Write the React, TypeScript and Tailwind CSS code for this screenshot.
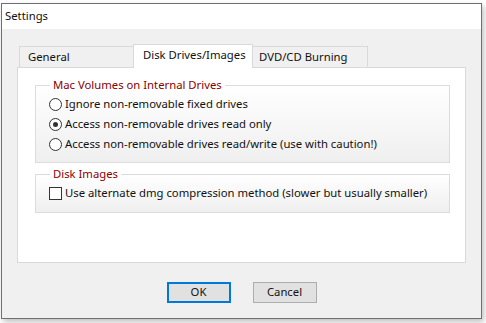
import { useState } from 'react';

const font = { fontFamily: '"Noto Sans", "Open Sans", Arial, sans-serif' };

function Radio({ checked, label, onClick }: { checked: boolean; label: string; onClick: () => void }) {
  return (
    <div className="flex h-[20px] items-center gap-[3px] cursor-default whitespace-nowrap" onClick={onClick}>
      <span className="flex h-[13px] w-[13px] shrink-0 items-center justify-center rounded-full border border-[#333333] bg-white">
        {checked && <span className="h-[5px] w-[5px] rounded-full bg-[#333333]" />}
      </span>
      <span>{label}</span>
    </div>
  );
}

function GroupBox({ title, className, children }: { title: string; className: string; children: React.ReactNode }) {
  return (
    <div className={`relative border border-[#dcdcdc] bg-gradient-to-b from-white to-[#efefef] ${className}`}>
      <span className="absolute -top-[9px] left-[14px] bg-white px-[3px] leading-[16px] text-[#8b0000] whitespace-nowrap">{title}</span>
      {children}
    </div>
  );
}

export default function App() {
  const [mode, setMode] = useState(1);
  const [altDmg, setAltDmg] = useState(false);

  const options = [
    'Ignore non-removable fixed drives',
    'Access non-removable drives read only',
    'Access non-removable drives read/write (use with caution!)',
  ];

  return (
    <div className="h-[323px] w-[486px] bg-white text-[11.3px] text-[#111111]" style={font}>
      <div className="ml-[1px] pt-[3px]">
        <div className="flex h-[316px] w-[481px] flex-col border border-[#6f6f6f] shadow-[2px_3px_6px_rgba(0,0,0,0.25)]">
          <div className="flex h-[25px] items-center bg-white pl-[3px]">Settings</div>
          <div className="flex flex-1 flex-col bg-[#f0f0f0] px-[15px] pt-[15px]">
            <div className="ml-[2px] flex items-end whitespace-nowrap">
              <div className="flex h-[21px] w-[114px] items-center border-l border-t border-[#d9d9d9] pl-[8px]">General</div>
              <div className="relative z-10 -mb-px flex h-[24px] w-[120px] items-center border-x border-t border-[#d9d9d9] bg-white pl-[9px] pb-[2px]">
                Disk Drives/Images
              </div>
              <div className="flex h-[21px] w-[115px] items-center border-r border-t border-[#d9d9d9] pl-[6px]">DVD/CD Burning</div>
            </div>
            <div className="h-[196px] w-[449px] border border-[#d9d9d9] bg-white pl-[17px] pt-[17px]">
              <GroupBox title="Mac Volumes on Internal Drives" className="h-[78px] w-[415px] pl-[13px] pt-[8px]">
                {options.map((o, i) => (
                  <Radio key={o} label={o} checked={mode === i} onClick={() => setMode(i)} />
                ))}
              </GroupBox>
              <GroupBox title="Disk Images" className="mt-[11px] h-[39px] w-[415px] pl-[13px] pt-[8px]">
                <div className="flex h-[20px] items-center gap-[3px] whitespace-nowrap" onClick={() => setAltDmg(!altDmg)}>
                  <span className="flex h-[13px] w-[13px] shrink-0 items-center justify-center border border-[#333333] bg-white text-[10px] leading-none">
                    {altDmg ? '✓' : ''}
                  </span>
                  <span>Use alternate dmg compression method (slower but usually smaller)</span>
                </div>
              </GroupBox>
            </div>
            <div className="mt-[19px] flex justify-center gap-[22px]">
              <button className="h-[21px] w-[64px] border-2 border-[#0078d7] bg-[#e1e1e1]">OK</button>
              <button className="h-[21px] w-[64px] border border-[#adadad] bg-[#e1e1e1]">Cancel</button>
            </div>
          </div>
        </div>
      </div>
    </div>
  );
}
